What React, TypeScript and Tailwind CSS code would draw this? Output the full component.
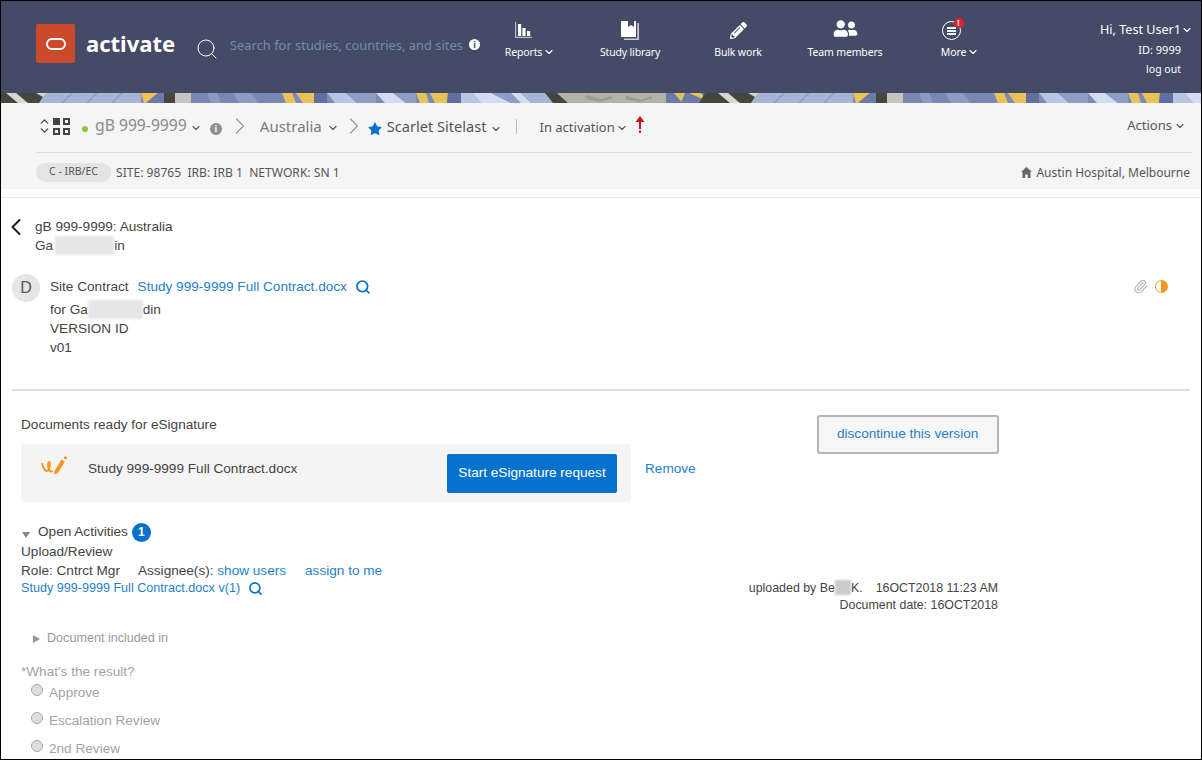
import React from 'react';
import { ChevronDown, ChevronUp, ChevronLeft, ChevronRight, Search, Paperclip, Star } from 'lucide-react';
import { FaPencilAlt, FaUserFriends } from 'react-icons/fa';

const Chev = ({ className = '' }: { className?: string }) => (
  <ChevronDown size={12} strokeWidth={2.2} className={`shrink-0 ${className}`} />
);

const InfoDot = ({ className = '' }: { className?: string }) => (
  <span className={`inline-flex shrink-0 items-center justify-center rounded-full font-bold text-[9px] leading-none ${className}`}>i</span>
);

// blurred out bits of names
const Blur = ({ className = '' }: { className?: string }) => (
  <span className={`inline-block blur-[1px] ${className}`} />
);

// one period of the banner artwork, it repeats every 712px
const stripe: [string, string][] = [
  ['#45443f', '0,0 46,0 38,10 0,10'],
  ['#d8d6cf', '5,0 15,0 27,10 17,10'],
  ['#d8d6cf', '35,0 46,0 38,10 42,4'],
  ['#a7b4d6', '46,0 140,0 140,10 38,10'],
  ['#8f9dc4', '70,0 72,0 62,10 60,10'],
  ['#8f9dc4', '95,0 97,0 87,10 85,10'],
  ['#8f9dc4', '120,0 122,0 112,10 110,10'],
  ['#e9c355', '140,0 157,0 145,10 143,10'],
  ['#6b7aa7', '145,10 157,0 163,0 163,10'],
  ['#46453f', '163,0 174,0 174,10 163,10'],
  ['#c6c4bc', '174,0 190,0 190,10 174,10'],
  ['#7788b2', '190,0 280,0 280,10 190,10'],
  ['#8c9bc2', '206,0 216,0 220,10 210,10'],
  ['#8c9bc2', '232,0 250,0 258,10 238,10'],
  ['#e6c257', '281,0 291,0 295,10 285,10'],
  ['#e6c257', '295,0 313,0 313,10 302,10'],
  ['#5f6f9f', '313,0 326,0 326,10 313,10'],
  ['#b9c5e3', '326,0 345,0 356,10 334,10'],
  ['#8e9dc3', '345,0 375,0 375,10 356,10'],
  ['#d3dcf2', '375,0 392,0 405,10 384,10'],
  ['#8e9dc3', '392,0 415,0 415,10 405,10'],
  ['#e6c257', '415,0 425,0 428,10 419,10'],
  ['#e6c257', '429,0 447,0 446,10 434,10'],
  ['#5f6f9f', '447,0 460,0 460,10 446,10'],
  ['#b9c5e3', '460,0 472,0 480,10 460,10'],
  ['#d3dcf2', '472,0 490,0 510,10 480,10'],
  ['#8e9dc3', '490,0 510,0 520,10 510,10'],
  ['#d3dcf2', '510,0 520,0 530,10 520,10'],
  ['#a7b4d6', '520,0 545,0 560,10 530,10'],
  ['#45443f', '544,0 556,0 567,10 552,10'],
  ['#b3b1a8', '556,0 665,0 665,10 567,10'],
  ['#9d9b92', '585,2 600,6 610,3 612,5 598,9 584,5'],
  ['#9d9b92', '625,3 640,7 650,3 652,5 638,9 624,6'],
  ['#6b7aa7', '665,0 673,0 680,10 665,10'],
  ['#e6c257', '673,0 684,0 694,10 682,10'],
  ['#e6c257', '691,0 702,0 704,8'],
  ['#6b7aa7', '680,10 684,0 704,0 708,10'],
  ['#e6c257', '688,0 700,0 706,8'],
  ['#45443f', '704,0 712,0 712,10 698,10'],
];

const NavItem = ({ w, icon, label, caret, shift = '' }: { w: string; icon: React.ReactNode; label: string; caret?: boolean; shift?: string }) => (
  <div className={`flex flex-col items-center ${w}`}>
    <div className={`h-[26px] flex items-end justify-center ${shift}`}>{icon}</div>
    <div className={`mt-[5px] flex items-center gap-[1px] text-[10.5px] leading-[14px] tracking-[-0.15px] text-white ${caret ? 'translate-x-[2px]' : ''}`}>
      {label}
      {caret && <Chev />}
    </div>
  </div>
);

export default function App() {
  return (
    <div className="w-[1202px] h-[760px] overflow-hidden border border-black bg-white font-['Liberation_Sans',sans-serif] text-[13.6px] text-[#444]">
      {/* Top bar */}
      <header className="h-[92px] bg-[#454a67] flex items-start font-['Noto_Sans',sans-serif]">
        <div className="ml-[35px] mt-[23px] w-[39px] h-[39px] shrink-0 rounded-[2px] bg-[#cb4a2c] flex items-center justify-center">
          <div className="w-[20px] h-[12px] rounded-full border-[2.5px] border-white" />
        </div>
        <div className="ml-[11px] mt-[24px] w-[109px] shrink-0 text-[22px] leading-[37px] font-bold text-white">activate</div>
        <Search size={24} strokeWidth={1} className="mt-[36px] shrink-0 text-white" />
        <div className="ml-[11px] mt-[35px] text-[12.9px] leading-[18px] text-[#6f8cb0] whitespace-nowrap w-[239px] shrink-0">Search for studies, countries, and sites</div>
        <InfoDot className="mt-[38px] w-[11px] h-[11px] bg-white text-[#454a67]" />
        <nav className="flex mt-[13px] -ml-[3px]">
          <NavItem
            w="w-[102px]"
            caret
            shift="-translate-x-[5px] -translate-y-[2px]"
            label="Reports"
            icon={
              <svg width="17" height="16" viewBox="0 0 17 16">
                <path d="M0 0h1.2v14.8H17V16H0z" fill="#b9bccb" />
                <path d="M3 2h3.2v12H3zM7.4 6h3.2v8H7.4zM12 9h3.2v5H12z" fill="#fff" />
              </svg>
            }
          />
          <NavItem
            w="w-[102px]"
            label="Study library"
            icon={
              <svg width="19" height="19" viewBox="0 0 19 19">
                <path d="M0 .8C0 .3.3 0 .8 0H7v6l3-2 3 2V0h2v16H.8c-.5 0-.8-.3-.8-.8z" fill="#fff" />
                <path d="M16.3 2H18v17H3v-1.6h13.3z" fill="#c9cbd6" />
              </svg>
            }
          />
          <NavItem w="w-[114px]" label="Bulk work" icon={<FaPencilAlt size={17} color="#fff" className="mb-[1px]" />} />
          <NavItem w="w-[100px]" label="Team members" icon={<FaUserFriends size={25} color="#fff" className="h-[19px] mb-[2px]" />} />
          <NavItem
            w="w-[126px]"
            caret
            shift="-translate-x-[7px]"
            label="More"
            icon={
              <div className="relative w-[19px] h-[19px] rounded-full border-[1.5px] border-white flex flex-col items-center justify-center gap-[1px]">
                <span className="w-[9px] h-[2px] bg-white" />
                <span className="w-[9px] h-[2px] bg-white" />
                <span className="w-[9px] h-[2px] bg-white" />
                <span className="absolute -top-[4px] -right-[4px] w-[10px] h-[10px] rounded-full bg-[#e0202a] text-white text-[8px] leading-[10px] font-bold text-center">!</span>
              </div>
            }
          />
        </nav>
        <div className="flex-1 mt-[20px] pr-[8px] flex flex-col items-end text-white">
          <div className="flex items-center text-[12.6px] leading-[18px]">Hi, Test User1<Chev /></div>
          <div className="mt-[4px] pr-[12px] text-[11px] leading-[14px]">ID: 9999</div>
          <div className="mt-[5px] pr-[12px] text-[10.5px] leading-[14px]">log out</div>
        </div>
      </header>

      {/* Pattern strip */}
      <svg className="block w-[1200px] h-[10px] blur-[0.4px]" viewBox="0 0 1200 10" preserveAspectRatio="none">
        <rect width="1200" height="10" fill="#7d8cb6" />
        {[0, 712].map((dx) => (
          <g key={dx} transform={`translate(${dx})`}>
            {stripe.map(([fill, pts], i) => (
              <polygon key={i} fill={fill} points={pts} />
            ))}
          </g>
        ))}
      </svg>

      {/* Study bar */}
      <section className="h-[86px] bg-[#f5f5f5] pl-[35px] pr-[9px] font-['Noto_Sans',sans-serif]">
        <div className="h-[50px] border-b border-[#dcdcdc] flex items-center text-[#6b6b6b]">
          <div className="ml-[2px] -mt-[3px] flex flex-col -space-y-[4px] text-[#444]">
            <ChevronUp size={13} strokeWidth={2.4} />
            <ChevronDown size={13} strokeWidth={2.4} />
          </div>
          <div className="ml-[2px] -mt-[3px] grid grid-cols-2 gap-[3px]">
            <span className="w-[7px] h-[7px] bg-[#444]" />
            <span className="w-[7px] h-[7px] border-2 border-[#444]" />
            <span className="w-[7px] h-[7px] border-2 border-[#444]" />
            <span className="w-[7px] h-[7px] border-2 border-[#444]" />
          </div>
          <span className="ml-[12px] w-[6px] h-[6px] shrink-0 rounded-full bg-[#8cc63f] mt-[2px]" />
          <span className="ml-[7px] -mt-[3px] text-[15.7px] text-[#8a8a8a] whitespace-nowrap">gB 999-9999</span>
          <Chev className="ml-[3px] text-[#555]" />
          <InfoDot className="ml-[8px] mt-[2px] w-[12px] h-[12px] bg-[#8f8f8f] text-white" />
          <ChevronRight size={28} strokeWidth={1.1} className="ml-[4px] -mt-[3px] shrink-0 text-[#999]" />
          <span className="ml-[6px] -mt-[2px] text-[15px] text-[#7a7a7a]">Australia</span>
          <Chev className="ml-[5px] text-[#555]" />
          <ChevronRight size={28} strokeWidth={1.1} className="ml-[1px] -mt-[3px] shrink-0 text-[#999]" />
          <Star size={16} fill="#0572ce" strokeWidth={0} className="-ml-[1px] mt-[2px] shrink-0" />
          <span className="ml-[4px] -mt-[2px] text-[14.6px] text-[#555] whitespace-nowrap">Scarlet Sitelast</span>
          <Chev className="ml-[3px] mt-[3px] text-[#555]" />
          <span className="ml-[14px] -mt-[3px] w-px h-[15px] bg-[#bdbdbd]" />
          <span className="ml-[23px] text-[13px] text-[#555] whitespace-nowrap">In activation</span>
          <Chev className="ml-[1px] text-[#555]" />
          <svg width="10" height="17" viewBox="0 0 10 17" fill="#d0101a" className="ml-[7px] -mt-[6px]">
            <path d="M5 0l4.5 6H6v7H4V6H.5zM4 14.5h2V17H4z" />
          </svg>
          <span className="ml-auto text-[13px] text-[#555] -mt-[4px]">Actions</span>
          <Chev className="ml-[2px] mr-[6px] -mt-[4px] text-[#555]" />
        </div>
        <div className="h-[36px] pt-[3px] flex items-center text-[12.1px] text-[#555]">
          <span className="-mt-[1px] w-[75px] h-[19px] rounded-full bg-[#e4e4e4] text-[10.5px] leading-[16px] text-center">C - IRB/EC</span>
          <span className="ml-[5px] mt-[2px] whitespace-pre">SITE: 98765  IRB: IRB 1  NETWORK: SN 1</span>
          <svg width="11" height="11" viewBox="0 0 11 11" fill="#666" className="ml-auto mr-[4px]">
            <path d="M5.5 0L11 5H9.5v6H6.8V7.5H4.2V11H1.5V5H0z" />
          </svg>
          <span className="mr-[2px] text-[12px]">Austin Hospital, Melbourne</span>
        </div>
      </section>

      <div className="mt-[8px] h-px bg-[#e8e8e8]" />

      {/* Record header */}
      <main className="px-[11px]">
        <div className="mt-[19px] flex">
          <ChevronLeft size={28} strokeWidth={1.8} className="-ml-[10px] -mt-[4px] shrink-0 text-[#222]" />
          <div className="ml-[5px] leading-[19px]">
            <div>gB 999-9999: Australia</div>
            <div className="flex">Ga<Blur className="ml-[2px] w-[59px] h-[19px] bg-[#e6e6e6]" />in</div>
          </div>
        </div>

        <div className="mt-[19px] flex h-[117px] border-b-2 border-[#dedede]">
          <div className="w-[28px] h-[28px] shrink-0 rounded-full bg-[#e6e6e6] text-[16px] leading-[28px] text-center text-[#555]">D</div>
          <div className="ml-[10px] mt-[3px] flex-1">
            <div className="flex items-center leading-[19px]">
              Site Contract
              <a className="ml-[9px] text-[#1f7fc9]">Study 999-9999 Full Contract.docx</a>
              <Search size={16} strokeWidth={2.6} className="ml-[8px] text-[#0572ce]" />
              <Paperclip size={15} strokeWidth={2} className="ml-auto mr-[7px] text-[#bbb]" />
              <span className="mr-[22px] w-[13px] h-[13px] rounded-full border-[1.5px] border-[#f7941d] bg-[linear-gradient(90deg,#fff_50%,#f7941d_50%)]" />
            </div>
            <div className="mt-[4px] flex leading-[19px]">for Ga<Blur className="w-[55px] h-[19px] bg-[#e6e6e6]" />din</div>
            <div className="leading-[19px]">VERSION ID</div>
            <div className="leading-[19px]">v01</div>
          </div>
        </div>

        {/* Documents ready */}
        <div className="pl-[9px]">
          <div className="flex items-start">
            <div>
              <div className="mt-[24px] leading-[19px]">Documents ready for eSignature</div>
              <div className="mt-[10px] flex items-center">
                <div className="w-[610px] h-[58px] rounded-[4px] bg-[#f4f4f4] flex items-center">
                  <svg width="26" height="21" viewBox="0 0 26 21" fill="none" className="ml-[20px] -mt-[14px]">
                    <path d="M1 7c1 5 3 8 5 8s3-4 3-7-2-3-2 1 2 8 5 6" stroke="#f7941d" strokeWidth="1.8" />
                    <path d="M13.5 15l7-11.5 3.4 2-7 11.5-3.9 1.5z" fill="#f7941d" />
                    <circle cx="24.5" cy="1.8" r="1.5" fill="#f7941d" />
                  </svg>
                  <span className="ml-[21px] -mt-[8px] whitespace-nowrap">Study 999-9999 Full Contract.docx</span>
                  <button className="ml-auto mr-[14px] w-[170px] h-[39px] rounded-[2px] bg-[#0572ce] text-white text-[13.6px]">Start eSignature request</button>
                </div>
                <a className="ml-[14px] -mt-[8px] text-[#1f7fc9]">Remove</a>
              </div>
            </div>
            <button className="ml-[121px] mt-[24px] w-[182px] h-[39px] rounded-[3px] border-2 border-[#b5b5b5] bg-[#f6f6f6] text-[#1f7fc9] text-[13.6px]">discontinue this version</button>
          </div>

          {/* Open activities */}
          <div className="mt-[20px] flex items-center h-[20px]">
            <span className="mt-[6px] ml-[1px] w-0 h-0 border-x-[4px] border-x-transparent border-t-[6px] border-t-[#888]" />
            <span className="ml-[8px]">Open Activities</span>
            <span className="ml-[4px] w-[19px] h-[19px] rounded-full bg-[#0572ce] text-white text-[12px] font-bold leading-[19px] text-center">1</span>
          </div>
          <div className="leading-[19px]">Upload/Review</div>
          <div className="leading-[19px] whitespace-pre">
            Role: Cntrct Mgr<span className="ml-[18px]">Assignee(s):</span> <a className="text-[#1f7fc9]">show users</a><a className="ml-[19px] text-[#1f7fc9]">assign to me</a>
          </div>
          <div className="flex w-[977px] justify-between">
            <div className="flex items-start text-[12.6px] leading-[17px] text-[#1f7fc9]">
              Study 999-9999 Full Contract.docx v(1)
              <Search size={15} strokeWidth={2.6} className="ml-[8px] mt-[1px] text-[#0572ce]" />
            </div>
            <div className="text-right text-[12.4px] leading-[17px]">
              <div className="flex justify-end">uploaded by Be<Blur className="w-[16px] h-[15px] bg-[#ccc]" />K.<span className="ml-[13px]">16OCT2018 11:23 AM</span></div>
              <div>Document date: 16OCT2018</div>
            </div>
          </div>

          <div className="mt-[16px] ml-[12px] flex items-center text-[12.6px] leading-[17px] text-[#999]">
            <span className="w-0 h-0 border-y-[4px] border-y-transparent border-l-[7px] border-l-[#999]" />
            <span className="ml-[7px]">Document included in</span>
          </div>
          <div className="mt-[16px] leading-[17px] text-[#a3a3a3]">*What's the result?</div>
          {['Approve', 'Escalation Review', '2nd Review'].map((t) => (
            <div key={t} className="ml-[10px] h-[28px] flex items-start">
              <span className="mt-[4px] w-[12px] h-[12px] rounded-full border border-[#aaa] bg-[#ddd]" />
              <span className="ml-[6px] mt-[4px] leading-[17px] text-[#a3a3a3]">{t}</span>
            </div>
          ))}
        </div>
      </main>
    </div>
  );
}
